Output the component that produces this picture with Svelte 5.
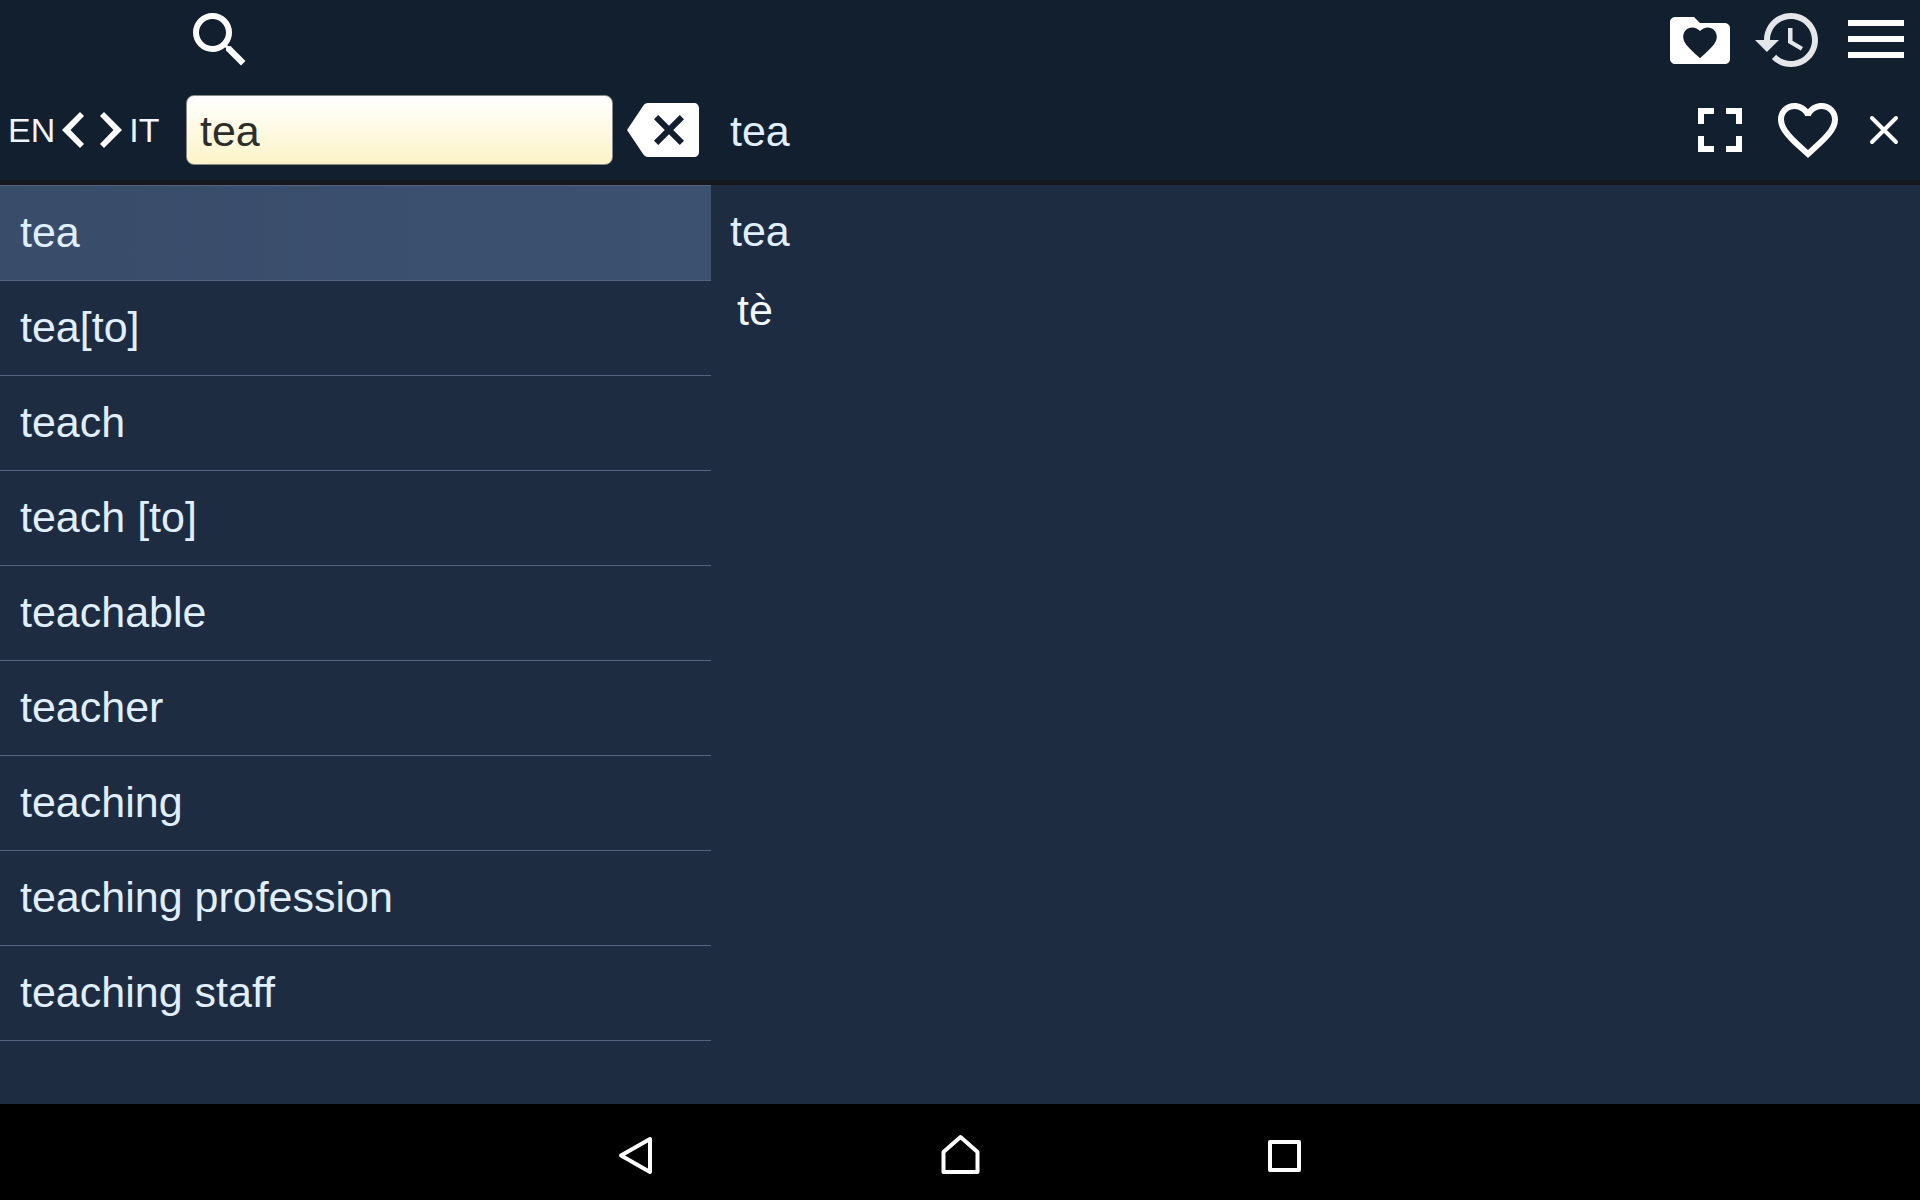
<script>
  const words = [
    'tea', 'tea[to]', 'teach', 'teach [to]', 'teachable',
    'teacher', 'teaching', 'teaching profession', 'teaching staff'
  ];
  let selected = $state(0);
  let query = $state('tea');
</script>

<div class="app">
  <header>
    <div class="bar top">
      <button class="icon" aria-label="Search">
        <svg viewBox="0 0 24 24"><path d="M15.5 14h-.79l-.28-.27A6.471 6.471 0 0 0 16 9.5 6.5 6.5 0 1 0 9.5 16c1.61 0 3.09-.59 4.23-1.57l.27.28v.79l5 4.99L20.49 19l-4.99-5zm-6 0C7.01 14 5 11.99 5 9.5S7.01 5 9.5 5 14 7.01 14 9.5 11.99 14 9.5 14z" /></svg>
      </button>
    </div>
    <div class="bar tools">
      <button class="icon" aria-label="Favourites">
        <svg viewBox="0 0 24 24"><path fill-rule="evenodd" d="M3.8 4.3H10l2 2h8.200c1 0 1.800.7 1.800 1.700v10.300c0 1-.8 1.700-1.800 1.700H3.800c-1 0-1.800-.8-1.800-1.700V6c0-1 .8-1.700 1.800-1.700zM12 18.100l.8-.8c2.900-2.600 4.800-4.300 4.800-6.400 0-1.700-1.300-3.100-3-3.100-1 0-2 .5-2.600 1.200-.6-.7-1.600-1.200-2.600-1.200-1.700 0-3 1.400-3 3.100 0 2.100 1.900 3.800 4.800 6.400z" /></svg>
      </button>
      <button class="icon dim" aria-label="History">
        <svg viewBox="0 0 24 24"><path d="M13 3c-4.970 0-9 4.030-9 9H1l3.890 3.890.07.14L9 12H6c0-3.870 3.130-7 7-7s7 3.130 7 7-3.130 7-7 7c-1.930 0-3.680-.79-4.940-2.060l-1.420 1.420C8.270 19.990 10.510 21 13 21c4.970 0 9-4.030 9-9s-4.030-9-9-9zm-1 5v5l4.280 2.540.72-1.210-3.500-2.080V8H12z" /></svg>
      </button>
      <button class="icon" aria-label="Menu">
        <svg viewBox="0 0 72 72"><path d="M8 16h56v6H8zM8 32h56v6H8zM8 48h56v6H8z" /></svg>
      </button>
    </div>

    <div class="bar search">
      <button class="lang" aria-label="Swap languages EN and IT">
        <span>EN</span>
        <svg viewBox="0 0 60 36"><path d="M18 0L0 18l18 18 4-4L8.500 18 22 4zM42 0l18 18-18 18-4-4 13.500-14L38 4z" /></svg>
        <span>IT</span>
      </button>
      <input type="text" aria-label="Word" bind:value={query} />
      <button class="icon" aria-label="Clear" onclick={() => (query = '')}>
        <svg viewBox="0 0 24 24"><path d="M22.300 3H7c-.69 0-1.230.35-1.590.88L0 12l5.410 8.110c.36.53.9.89 1.590.89h15.300c1 0 1.700-.7 1.700-1.700V4.700c0-1-.7-1.700-1.700-1.700zM19 15.590L17.590 17 14 13.410 10.410 17 9 15.590 12.590 12 9 8.410 10.410 7 14 10.590 17.590 7 19 8.410 15.410 12 19 15.590z" /></svg>
      </button>
    </div>
    <div class="bar entry">
      <h1>tea</h1>
      <button class="icon" aria-label="Full screen">
        <svg viewBox="0 0 72 72"><path d="M14 14h16v6H20v10h-6zM42 14h16v16h-6V20H42zM14 42h6v10h10v6H14zM52 42h6v16H42v-6h10z" /></svg>
      </button>
      <button class="icon" aria-label="Add to favourites">
        <svg viewBox="0 0 24 24"><path d="M16.500 3c-1.740 0-3.410.81-4.500 2.090C10.910 3.810 9.240 3 7.500 3 4.420 3 2 5.420 2 8.500c0 3.780 3.400 6.860 8.550 11.540L12 21.350l1.450-1.320C18.600 15.360 22 12.280 22 8.500 22 5.420 19.580 3 16.500 3zm-4.400 15.550l-.1.100-.1-.1C7.140 14.240 4 11.390 4 8.500 4 6.500 5.500 5 7.500 5c1.540 0 3.040.99 3.570 2.360h1.870C13.460 5.990 14.960 5 16.500 5c2 0 3.500 1.500 3.500 3.500 0 2.890-3.140 5.740-7.900 10.050z" /></svg>
      </button>
      <button class="close" aria-label="Close">
        <svg viewBox="0 0 48 72"><path d="M12 24l24 24M36 24L12 48" /></svg>
      </button>
    </div>
  </header>

  <main>
    <ul>
      {#each words as word, i}
        <li>
          <button class:selected={selected === i} onclick={() => (selected = i)}>{word}</button>
        </li>
      {/each}
    </ul>
    <article>
      <h2>tea</h2>
      <p>tè</p>
    </article>
  </main>

  <nav aria-label="System">
    <button aria-label="Back"><svg viewBox="0 0 48 48"><path d="M38 7v33L9 23.500z" /></svg></button>
    <button aria-label="Home"><svg viewBox="0 0 48 48"><path d="M24.500 5L7.500 20v20h34V20z" /></svg></button>
    <button aria-label="Recent apps"><svg viewBox="0 0 48 48"><path d="M10 10h29v28H10z" /></svg></button>
  </nav>
</div>

<style>
  :global(body) {
    margin: 0;
    background: #1d2c41;
  }
  .app {
    display: flex;
    flex-direction: column;
    min-height: 100vh;
    font-family: 'Liberation Sans', Arial, sans-serif;
    font-size: 43px;
    line-height: 48px;
    color: #e0efff;
  }
  button {
    margin: 0;
    padding: 0;
    border: 0;
    background: none;
    color: inherit;
    font: inherit;
    cursor: pointer;
  }
  svg {
    display: block;
    fill: #fff;
  }
  h1, h2, p, ul {
    margin: 0;
    padding: 0;
    font-size: inherit;
    font-weight: normal;
  }
  header, main {
    display: grid;
    grid-template-columns: 711fr 1209fr;
  }
  header {
    grid-template-rows: 80px 100px;
    background: #121f2f;
  }
  .bar {
    display: flex;
    align-items: center;
    min-width: 0;
  }
  .icon, .icon svg {
    flex: none;
    width: 72px;
    height: 72px;
  }
  .dim svg {
    fill: #e4e7ea;
  }
  .top {
    padding-left: 184px;
  }
  .tools {
    justify-content: flex-end;
    gap: 16px;
    padding-right: 8px;
  }
  .search {
    gap: 14px;
    padding: 0 12px 0 8px;
  }
  .lang {
    display: flex;
    flex: none;
    align-items: center;
    gap: 7px;
    width: 164px;
    font-size: 34px;
    color: #f0f4ff;
  }
  .lang svg {
    width: 60px;
    height: 36px;
  }
  input {
    flex: 1;
    box-sizing: border-box;
    min-width: 0;
    height: 70px;
    padding: 2px 13px 0;
    border: 1px solid #8a8a86;
    border-radius: 8px;
    background: linear-gradient(#fff, #fdf4c8);
    color: #2d2d2a;
    font: inherit;
    outline: none;
  }
  .entry {
    gap: 16px;
    padding: 0 12px 0 19px;
  }
  .entry h1 {
    flex: 1;
    padding-top: 2px;
  }
  .close svg {
    width: 48px;
    height: 72px;
    fill: none;
    stroke: #fff;
    stroke-width: 4;
    stroke-linecap: round;
  }
  main {
    flex: 1;
    border-top: 5px solid #15171f;
  }
  ul {
    list-style: none;
    border-top: 1px solid #53657f;
    align-self: start;
  }
  li {
    border-bottom: 1px solid #53657f;
  }
  li button {
    display: block;
    width: 100%;
    height: 94px;
    padding: 0 20px 3px;
    text-align: left;
  }
  li .selected {
    background: linear-gradient(90deg, #394c6a, #3c5170);
  }
  article {
    padding: 22px 19px;
  }
  article p {
    padding: 31px 7px;
    color: #f0f8fc;
  }
  nav {
    display: flex;
    align-items: center;
    justify-content: center;
    gap: 276px;
    height: 88px;
    padding-top: 8px;
    background: #000;
  }
  nav svg {
    width: 48px;
    height: 48px;
    fill: none;
    stroke: #fff;
    stroke-width: 4;
    stroke-linejoin: round;
  }
</style>
